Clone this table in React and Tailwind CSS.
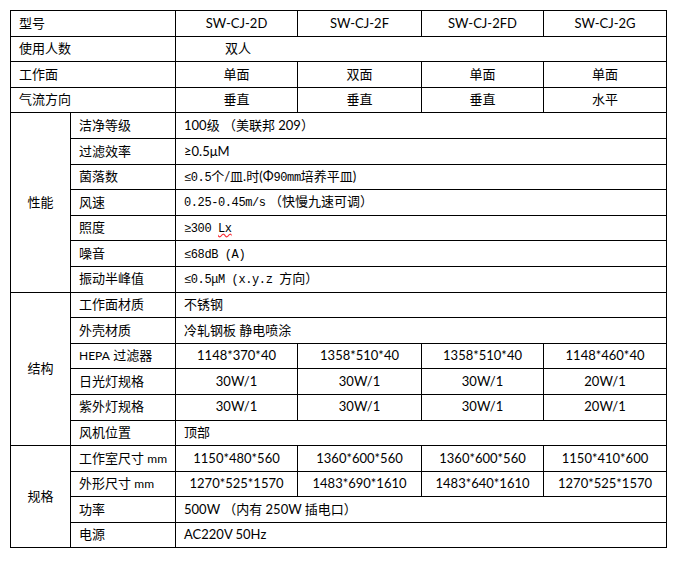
import React from "react";

const cell = "border border-black px-2 align-middle whitespace-nowrap";
const mono = "font-['Liberation_Mono'] text-[12px] tracking-[-0.4px]";

function M({ children }) {
  return <span className={mono}>{children}</span>;
}

const top = [
  ["型号", ["SW-CJ-2D", "SW-CJ-2F", "SW-CJ-2FD", "SW-CJ-2G"]],
  ["使用人数", "双人"],
  ["工作面", ["单面", "双面", "单面", "单面"]],
  ["气流方向", ["垂直", "垂直", "垂直", "水平"]],
];

const groups = [
  {
    name: "性能",
    rows: [
      ["洁净等级", <>100级 （美联邦 209）</>],
      ["过滤效率", <>≥0.5μM</>],
      ["菌落数", <><M>≤0.5</M>个/皿.时(Φ<M>90mm</M>培养平皿)</>],
      ["风速", <><M>0.25-0.45m/s</M> （快慢九速可调）</>],
      ["照度", <><M>≥300 </M><span className={mono + " underline decoration-wavy decoration-red-500"}>Lx</span></>],
      ["噪音", <><M>≤68dB  (A)</M></>],
      ["振动半峰值", <><M>≤0.5μM  (x.y.z </M>方向）</>],
    ],
  },
  {
    name: "结构",
    rows: [
      ["工作面材质", "不锈钢"],
      ["外壳材质", "冷轧钢板 静电喷涂"],
      [<><span className="text-[12px]">HEPA</span> 过滤器</>, ["1148*370*40", "1358*510*40", "1358*510*40", "1148*460*40"]],
      ["日光灯规格", ["30W/1", "30W/1", "30W/1", "20W/1"]],
      ["紫外灯规格", ["30W/1", "30W/1", "30W/1", "20W/1"]],
      ["风机位置", "顶部"],
    ],
  },
  {
    name: "规格",
    rows: [
      [<>工作室尺寸 <span className="text-[12px]">mm</span></>, ["1150*480*560", "1360*600*560", "1360*600*560", "1150*410*600"]],
      [<>外形尺寸 <span className="text-[12px]">mm</span></>, ["1270*525*1570", "1483*690*1610", "1483*640*1610", "1270*525*1570"]],
      ["功率", "500W （内有 250W 插电口）"],
      ["电源", "AC220V 50Hz"],
    ],
  },
];

function Values({ v }) {
  if (Array.isArray(v)) {
    return v.map((x, i) => (
      <td key={i} className={cell + " text-center"}>{x}</td>
    ));
  }
  return <td colSpan={4} className={cell}>{v}</td>;
}

export default function App() {
  return (
    <div className="w-[679px] h-[569px] bg-white pt-[10px] pl-[10px] text-black text-[13px] font-['Lato','Noto_Sans_CJK_SC',sans-serif]">
      <table className="table-fixed border-collapse w-[656px]">
        <colgroup>
          <col className="w-[60px]" />
          <col className="w-[105px]" />
          <col className="w-[122px]" />
          <col className="w-[124px]" />
          <col className="w-[122px]" />
          <col className="w-[123px]" />
        </colgroup>
        <tbody>
          {top.map(([label, v], i) => (
            <tr key={i} className="h-[25.6px]">
              <td colSpan={2} className={cell}>{label}</td>
              {Array.isArray(v) ? (
                <Values v={v} />
              ) : (
                <td colSpan={4} className={cell + " pl-[49px]"}>{v}</td>
              )}
            </tr>
          ))}
          {groups.map((g) =>
            g.rows.map(([label, v], i) => (
              <tr key={g.name + i} className="h-[25.6px]">
                {i === 0 && (
                  <td rowSpan={g.rows.length} className={cell + " text-center"}>
                    {g.name}
                  </td>
                )}
                <td className={cell}>{label}</td>
                <Values v={v} />
              </tr>
            ))
          )}
        </tbody>
      </table>
    </div>
  );
}
